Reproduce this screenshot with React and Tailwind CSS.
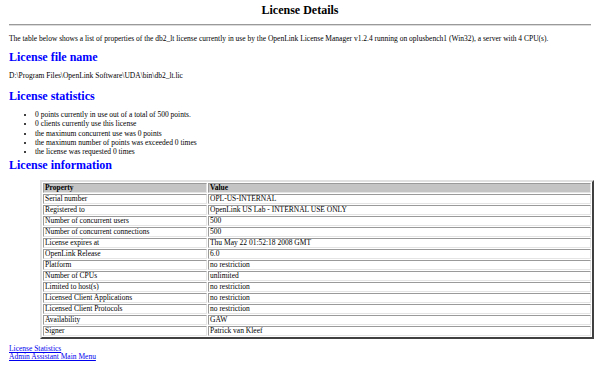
import React from 'react';

const stats = [
  "0 points currently in use out of a total of 500 points.",
  "0 clients currently use this license",
  "the maximum concurrent use was 0 points",
  "the maximum number of points was exceeded 0 times",
  "the license was requested 0 times",
];

const rows = [
  ["Serial number", "OPL-US-INTERNAL"],
  ["Registered to", "OpenLink US Lab - INTERNAL USE ONLY"],
  ["Number of concurrent users", "500"],
  ["Number of concurrent connections", "500"],
  ["License expires at", "Thu May 22 01:52:18 2008 GMT"],
  ["OpenLink Release", "6.0"],
  ["Platform", "no restriction"],
  ["Number of CPUs", "unlimited"],
  ["Limited to host(s)", "no restriction"],
  ["Licensed Client Applications", "no restriction"],
  ["Licensed Client Protocols", "no restriction"],
  ["Availability", "GAW"],
  ["Signer", "Patrick van Kleef"],
];

const cell =
  "border border-t-[#9a9a9a] border-l-[#9a9a9a] border-r-[#e4e4e4] border-b-[#e4e4e4] px-[1px] py-0 text-left align-middle leading-[8px] h-[10px]";

const Heading = ({ children, className = "" }) => (
  <h2 className={"font-[Liberation_Serif] text-[12px] leading-[14px] font-bold text-[#0000ff] " + className}>
    {children}
  </h2>
);

export default function App() {
  return (
    <div className="w-[600px] h-[366px] overflow-hidden bg-white text-black font-[Liberation_Serif] text-[7.5px] leading-[8px] px-[9px] pt-[3px]">
      <h1 className="font-[Liberation_Serif] text-[12px] leading-[14px] font-bold text-center">License Details</h1>
      <hr className="mt-[7px] border-0 border-t border-b border-t-[#9a9a9a] border-b-[#dcdcdc] h-[2px]" />

      <p className="mt-[9px]">
        The table below shows a list of properties of the db2_lt license currently in use by the OpenLink License
        Manager v1.2.4 running on oplusbench1 (Win32), a server with 4 CPU(s).
      </p>

      <Heading className="mt-[7px]">License file name</Heading>
      <p className="mt-[8px]">D:\Program Files\OpenLink Software\UDA\bin\db2_lt.lic</p>

      <Heading className="mt-[9px]">License statistics</Heading>
      <ul className="mt-[7px] pl-[26px] list-disc leading-[9.3px]">
        {stats.map((s) => (
          <li key={s}>{s}</li>
        ))}
      </ul>

      <Heading className="mt-[2px]">License information</Heading>

      <table className="mt-[8px] ml-[31px] w-[554px] border-separate border-spacing-[1px] border-2 border-t-[#e0e0e0] border-l-[#e0e0e0] border-r-[#404040] border-b-[#404040]">
        <thead>
          <tr className="bg-[#c4c4c4]">
            <th className={cell + " w-[164px] font-bold"}>Property</th>
            <th className={cell + " font-bold"}>Value</th>
          </tr>
        </thead>
        <tbody>
          {rows.map(([k, v]) => (
            <tr key={k}>
              <td className={cell}>{k}</td>
              <td className={cell}>{v}</td>
            </tr>
          ))}
        </tbody>
      </table>

      <div className="mt-[6px] flex flex-col items-start">
        <a href="#" className="text-[#0000ee] underline">License Statistics</a>
        <a href="#" className="text-[#0000ee] underline">Admin Assistant Main Menu</a>
      </div>
    </div>
  );
}
